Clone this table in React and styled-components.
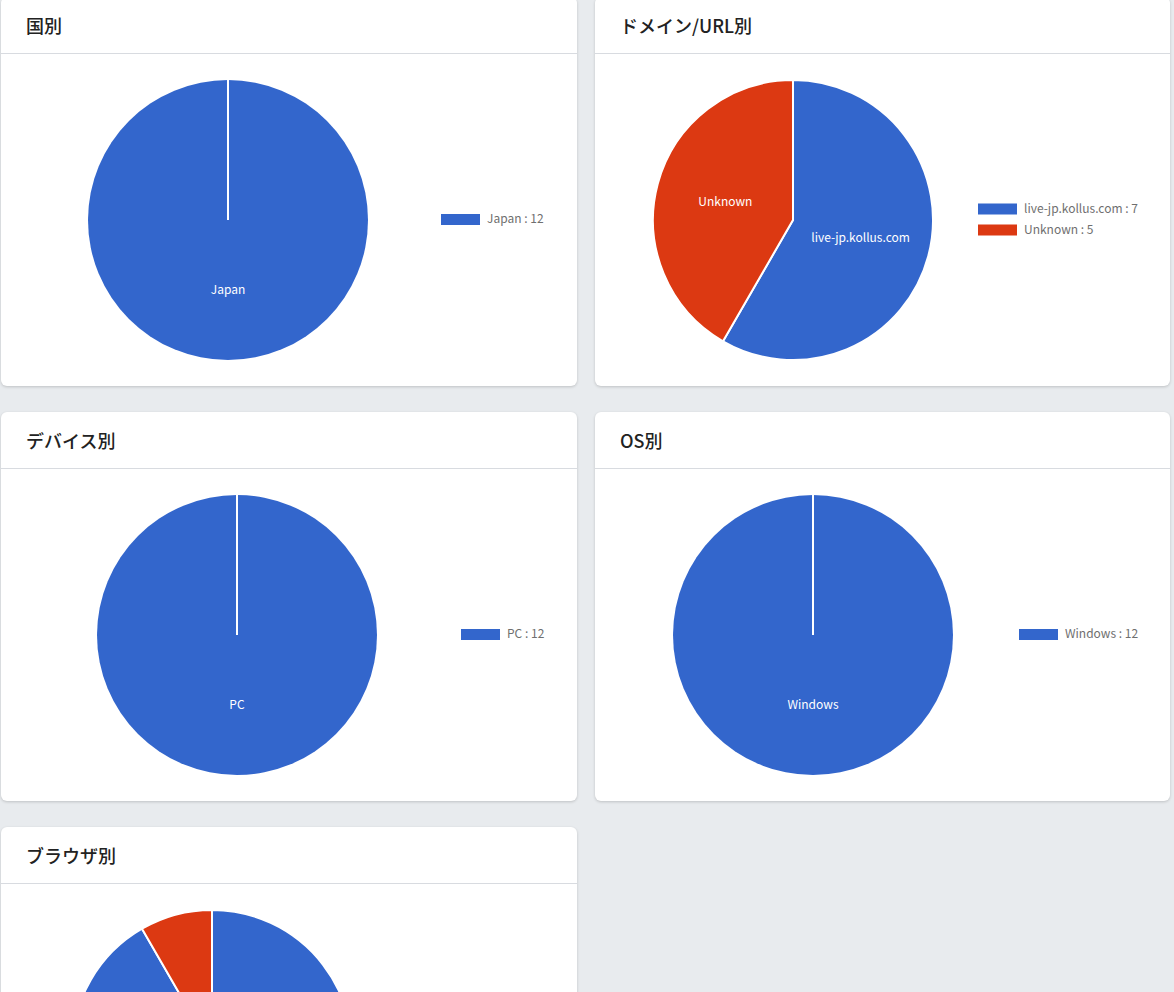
import React from "react";
import styled, { createGlobalStyle } from "styled-components";

const BLUE = "#3366cc";
const RED = "#dc3912";

const GlobalStyle = createGlobalStyle`
  body {
    margin: 0;
    background: #e8ebee;
    font-family: "Noto Sans CJK JP", "Noto Sans", sans-serif;
    color: #222;
  }
`;

const Grid = styled.div`
  display: grid;
  grid-template-columns: 576px 575px;
  column-gap: 18px;
  row-gap: 26px;
  margin-top: -3px;
  padding: 0 4px 40px 1px;
`;

const Card = styled.section`
  background: #fff;
  border-radius: 6px;
  box-shadow: 0 1px 3px rgba(0, 0, 0, 0.18);
  overflow: hidden;
`;

const CardHeader = styled.header`
  height: 56px;
  display: flex;
  align-items: center;
  padding: 0 25px;
  border-bottom: 1px solid #d8dbe0;
  font-size: 18px;
  font-weight: 500;
  color: #222;
`;

const ChartArea = styled.div`
  height: 332px;
  svg {
    display: block;
  }
`;

const point = (cx, cy, r, deg) => {
  const a = (deg * Math.PI) / 180;
  return [cx + r * Math.sin(a), cy - r * Math.cos(a)];
};

function PieChart({ data, cx, legendX, width }) {
  const cy = 166;
  const r = 140;
  const total = data.reduce((s, d) => s + d.value, 0);
  let start = 0;
  const slices = data.map((d) => {
    const sweep = (d.value / total) * 360;
    const s = { ...d, start, end: start + sweep };
    start += sweep;
    return s;
  });
  const legendTop = cy - 1 - ((data.length - 1) * 21) / 2;

  return (
    <svg width={width} height={332}>
      {slices.map((s) => {
        if (s.end - s.start >= 359.99) {
          return (
            <g key={s.label}>
              <circle cx={cx} cy={cy} r={r} fill={s.color} />
              <line x1={cx} y1={cy} x2={cx} y2={cy - r} stroke="#fff" strokeWidth="2" />
            </g>
          );
        }
        const [x1, y1] = point(cx, cy, r, s.start);
        const [x2, y2] = point(cx, cy, r, s.end);
        const large = s.end - s.start > 180 ? 1 : 0;
        return (
          <path
            key={s.label}
            d={`M${cx} ${cy} L${x1} ${y1} A${r} ${r} 0 ${large} 1 ${x2} ${y2} Z`}
            fill={s.color}
            stroke="#fff"
            strokeWidth="2"
            strokeLinejoin="round"
          />
        );
      })}
      {slices.map((s) => {
        if (s.end - s.start < 45) return null;
        const [lx, ly] = point(cx, cy, r / 2, (s.start + s.end) / 2);
        return (
          <text
            key={s.label + "-l"}
            x={lx}
            y={ly + 4}
            fill="#fff"
            fontSize="12"
            textAnchor="middle"
            fontFamily="'Noto Sans CJK JP', 'Noto Sans', sans-serif"
          >
            {s.label}
          </text>
        );
      })}
      {legendX != null &&
        data.map((d, i) => (
          <g key={d.label + "-g"}>
            <rect x={legendX} y={legendTop + i * 21 - 5} width={39} height={11} fill={d.color} />
            <text
              x={legendX + 46}
              y={legendTop + i * 21 + 4}
              fill="#6f6f6f"
              fontSize="12"
              fontFamily="'Noto Sans CJK JP', 'Noto Sans', sans-serif"
            >
              {d.label} : {d.value}
            </text>
          </g>
        ))}
    </svg>
  );
}

const charts = [
  {
    title: "国別",
    width: 576,
    cx: 227,
    legendX: 440,
    data: [{ label: "Japan", value: 12, color: BLUE }],
  },
  {
    title: "ドメイン/URL別",
    width: 575,
    cx: 198,
    legendX: 383,
    data: [
      { label: "live-jp.kollus.com", value: 7, color: BLUE },
      { label: "Unknown", value: 5, color: RED },
    ],
  },
  {
    title: "デバイス別",
    width: 576,
    cx: 236,
    legendX: 460,
    data: [{ label: "PC", value: 12, color: BLUE }],
  },
  {
    title: "OS別",
    width: 575,
    cx: 218,
    legendX: 424,
    data: [{ label: "Windows", value: 12, color: BLUE }],
  },
  {
    title: "ブラウザ別",
    width: 576,
    cx: 211,
    legendX: 424,
    data: [
      { label: "Chrome", value: 7, color: BLUE },
      { label: "Edge", value: 2, color: RED },
      { label: "Safari", value: 2, color: BLUE },
      { label: "Firefox", value: 1, color: RED },
    ],
  },
];

export default function App() {
  return (
    <>
      <GlobalStyle />
      <Grid>
        {charts.map((c) => (
          <Card key={c.title}>
            <CardHeader>{c.title}</CardHeader>
            <ChartArea>
              <PieChart data={c.data} cx={c.cx} legendX={c.legendX} width={c.width} />
            </ChartArea>
          </Card>
        ))}
      </Grid>
    </>
  );
}
